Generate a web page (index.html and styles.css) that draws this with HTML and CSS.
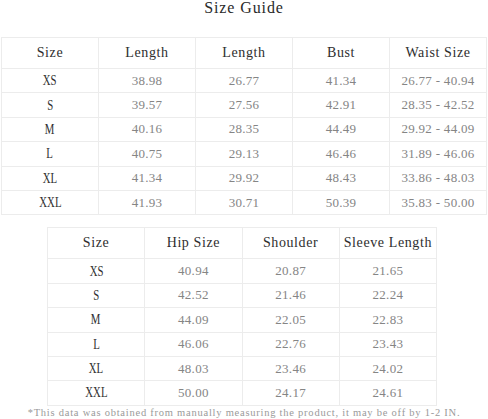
FILE: index.html
```html
<!DOCTYPE html>
<html>
<head>
<meta charset="utf-8">
<link rel="stylesheet" href="styles.css">
</head>
<body>
<h1 class="title">Size Guide</h1>
<table class="grid grid-main">
  <thead>
    <tr><th>Size</th><th>Length</th><th>Length</th><th>Bust</th><th>Waist Size</th></tr>
  </thead>
  <tbody>
    <tr><td class="sz"><span class="lbl">XS</span></td><td>38.98</td><td>26.77</td><td>41.34</td><td>26.77 - 40.94</td></tr>
    <tr><td class="sz"><span class="lbl">S</span></td><td>39.57</td><td>27.56</td><td>42.91</td><td>28.35 - 42.52</td></tr>
    <tr><td class="sz"><span class="lbl">M</span></td><td>40.16</td><td>28.35</td><td>44.49</td><td>29.92 - 44.09</td></tr>
    <tr><td class="sz"><span class="lbl">L</span></td><td>40.75</td><td>29.13</td><td>46.46</td><td>31.89 - 46.06</td></tr>
    <tr><td class="sz"><span class="lbl">XL</span></td><td>41.34</td><td>29.92</td><td>48.43</td><td>33.86 - 48.03</td></tr>
    <tr><td class="sz"><span class="lbl">XXL</span></td><td>41.93</td><td>30.71</td><td>50.39</td><td>35.83 - 50.00</td></tr>
  </tbody>
</table>
<table class="grid grid-second">
  <thead>
    <tr><th>Size</th><th>Hip Size</th><th>Shoulder</th><th>Sleeve Length</th></tr>
  </thead>
  <tbody>
    <tr><td class="sz"><span class="lbl">XS</span></td><td>40.94</td><td>20.87</td><td>21.65</td></tr>
    <tr><td class="sz"><span class="lbl">S</span></td><td>42.52</td><td>21.46</td><td>22.24</td></tr>
    <tr><td class="sz"><span class="lbl">M</span></td><td>44.09</td><td>22.05</td><td>22.83</td></tr>
    <tr><td class="sz"><span class="lbl">L</span></td><td>46.06</td><td>22.76</td><td>23.43</td></tr>
    <tr><td class="sz"><span class="lbl">XL</span></td><td>48.03</td><td>23.46</td><td>24.02</td></tr>
    <tr><td class="sz"><span class="lbl">XXL</span></td><td>50.00</td><td>24.17</td><td>24.61</td></tr>
  </tbody>
</table>
<p class="note">*This data was obtained from manually measuring the product, it may be off by 1-2 IN.</p>
</body>
</html>
```

FILE: styles.css
```css
html, body {
  margin: 0;
  padding: 0;
  background: #ffffff;
}
body {
  font-family: "Liberation Serif", "Times New Roman", serif;
  color: #333333;
  width: 488px;
}
.title {
  margin: 0;
  height: 15px;
  line-height: 15px;
  font-size: 16px;
  font-weight: normal;
  letter-spacing: 0.9px;
  text-align: center;
  color: #2a2a2a;
}
.grid {
  border-collapse: collapse;
  table-layout: fixed;
}
.grid-main {
  width: 486px;
  margin: 22px 0 0 1px;
}
.grid-second {
  width: 390px;
  margin: 12px 0 0 47px;
}
.grid th,
.grid td {
  border: 1px solid #ececec;
  text-align: center;
  padding: 0;
  white-space: nowrap;
}
.grid th {
  height: 30px;
  font-size: 14px;
  font-weight: normal;
  letter-spacing: 0.6px;
  color: #2e2e2e;
}
.grid td {
  height: 23.4px;
  font-size: 13px;
  letter-spacing: 0.3px;
  color: #858585;
}
.grid td.sz {
  font-size: 15px;
  letter-spacing: 0;
  color: #2e2e2e;
}
.lbl {
  display: inline-block;
  transform: scaleX(0.72);
}
.note {
  margin: 0;
  font-size: 10.5px;
  letter-spacing: 0.76px;
  line-height: 14px;
  text-align: center;
  white-space: nowrap;
  color: #9a9a9a;
}
```
